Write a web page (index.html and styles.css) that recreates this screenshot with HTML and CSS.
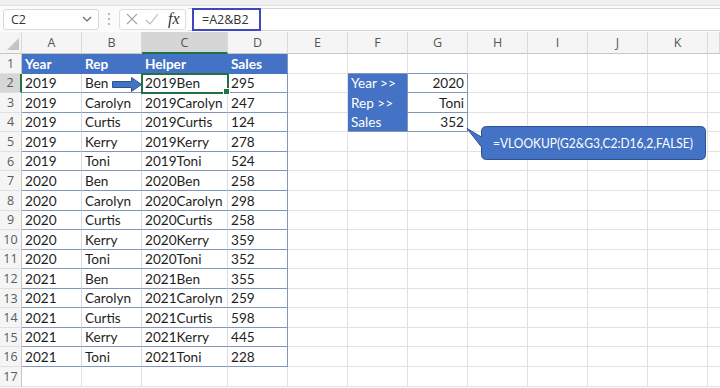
FILE: index.html
```html
<!DOCTYPE html>
<html lang="en">
<head>
    <meta charset="UTF-8">
    <title>VLOOKUP helper column</title>
    <link rel="stylesheet" href="styles.css">
</head>
<body>
    <div class="ribbon-strip"></div>
    <div class="formula-row">
        <div class="name-box">
            <span>C2</span>
            <svg width="12" height="8" viewBox="0 0 12 8"><path d="M2 2 L6 6 L10 2" fill="none" stroke="#666" stroke-width="1.2"/></svg>
        </div>
        <div class="grip">
            <svg width="4" height="14" viewBox="0 0 4 14"><circle cx="2" cy="2" r="1.1" fill="#aaa"/><circle cx="2" cy="7" r="1.1" fill="#aaa"/><circle cx="2" cy="12" r="1.1" fill="#aaa"/></svg>
        </div>
        <div class="fx-box">
            <svg width="14" height="14" viewBox="0 0 14 14"><path d="M2 2 L12 12 M12 2 L2 12" stroke="#a6a6a6" stroke-width="1.1"/></svg>
            <svg width="16" height="14" viewBox="0 0 16 14"><path d="M2 8 L6 12 L14 2" fill="none" stroke="#b5b5b5" stroke-width="1.1"/></svg>
            <span class="fx">fx</span>
        </div>
        <div class="formula-bar">
            <div class="formula-edit">=A2&amp;B2</div>
        </div>
    </div>

    <table class="sheet">
        <colgroup>
            <col style="width:22px"><col style="width:60px"><col style="width:60px"><col style="width:86px">
            <col style="width:60px"><col style="width:60px"><col style="width:60px"><col style="width:60px">
            <col style="width:60px"><col style="width:60px"><col style="width:60px"><col style="width:60px">
            <col style="width:12px">
        </colgroup>
        <thead>
            <tr>
                <th class="corner"><span class="corner-mark"></span></th>
                <th>A</th><th>B</th><th class="active-col">C</th><th>D</th><th>E</th><th>F</th>
                <th>G</th><th>H</th><th>I</th><th>J</th><th>K</th><th class="edge"></th>
            </tr>
        </thead>
        <tbody>
            <tr>
                <th>1</th>
                <td class="hdr">Year</td><td class="hdr">Rep</td><td class="hdr">Helper</td><td class="hdr last">Sales</td>
                <td></td><td class="above-box"></td><td class="above-box"></td><td></td><td></td><td></td><td></td><td class="edge"></td>
            </tr>
            <tr>
                <th class="active-row">2</th>
                <td class="t">2019</td><td class="t">Ben</td><td class="t selected">2019Ben</td><td class="t last">295</td>
                <td></td><td class="lbl">Year &gt;&gt;</td><td class="val">2020</td><td></td><td></td><td></td><td></td><td class="edge"></td>
            </tr>
            <tr>
                <th>3</th>
                <td class="t">2019</td><td class="t">Carolyn</td><td class="t">2019Carolyn</td><td class="t last">247</td>
                <td></td><td class="lbl">Rep &gt;&gt;</td><td class="val">Toni</td><td></td><td></td><td></td><td></td><td class="edge"></td>
            </tr>
            <tr>
                <th>4</th>
                <td class="t">2019</td><td class="t">Curtis</td><td class="t">2019Curtis</td><td class="t last">124</td>
                <td></td><td class="lbl">Sales</td><td class="val">352</td><td></td><td></td><td></td><td></td><td class="edge"></td>
            </tr>
            <tr>
                <th>5</th>
                <td class="t">2019</td><td class="t">Kerry</td><td class="t">2019Kerry</td><td class="t last">278</td>
                <td></td><td></td><td></td><td></td><td></td><td></td><td></td><td class="edge"></td>
            </tr>
            <tr>
                <th>6</th>
                <td class="t">2019</td><td class="t">Toni</td><td class="t">2019Toni</td><td class="t last">524</td>
                <td></td><td></td><td></td><td></td><td></td><td></td><td></td><td class="edge"></td>
            </tr>
            <tr>
                <th>7</th>
                <td class="t">2020</td><td class="t">Ben</td><td class="t">2020Ben</td><td class="t last">258</td>
                <td></td><td></td><td></td><td></td><td></td><td></td><td></td><td class="edge"></td>
            </tr>
            <tr>
                <th>8</th>
                <td class="t">2020</td><td class="t">Carolyn</td><td class="t">2020Carolyn</td><td class="t last">298</td>
                <td></td><td></td><td></td><td></td><td></td><td></td><td></td><td class="edge"></td>
            </tr>
            <tr>
                <th>9</th>
                <td class="t">2020</td><td class="t">Curtis</td><td class="t">2020Curtis</td><td class="t last">258</td>
                <td></td><td></td><td></td><td></td><td></td><td></td><td></td><td class="edge"></td>
            </tr>
            <tr>
                <th>10</th>
                <td class="t">2020</td><td class="t">Kerry</td><td class="t">2020Kerry</td><td class="t last">359</td>
                <td></td><td></td><td></td><td></td><td></td><td></td><td></td><td class="edge"></td>
            </tr>
            <tr>
                <th>11</th>
                <td class="t">2020</td><td class="t">Toni</td><td class="t">2020Toni</td><td class="t last">352</td>
                <td></td><td></td><td></td><td></td><td></td><td></td><td></td><td class="edge"></td>
            </tr>
            <tr>
                <th>12</th>
                <td class="t">2021</td><td class="t">Ben</td><td class="t">2021Ben</td><td class="t last">355</td>
                <td></td><td></td><td></td><td></td><td></td><td></td><td></td><td class="edge"></td>
            </tr>
            <tr>
                <th>13</th>
                <td class="t">2021</td><td class="t">Carolyn</td><td class="t">2021Carolyn</td><td class="t last">259</td>
                <td></td><td></td><td></td><td></td><td></td><td></td><td></td><td class="edge"></td>
            </tr>
            <tr>
                <th>14</th>
                <td class="t">2021</td><td class="t">Curtis</td><td class="t">2021Curtis</td><td class="t last">598</td>
                <td></td><td></td><td></td><td></td><td></td><td></td><td></td><td class="edge"></td>
            </tr>
            <tr>
                <th>15</th>
                <td class="t">2021</td><td class="t">Kerry</td><td class="t">2021Kerry</td><td class="t last">445</td>
                <td></td><td></td><td></td><td></td><td></td><td></td><td></td><td class="edge"></td>
            </tr>
            <tr>
                <th>16</th>
                <td class="t">2021</td><td class="t">Toni</td><td class="t">2021Toni</td><td class="t last">228</td>
                <td></td><td></td><td></td><td></td><td></td><td></td><td></td><td class="edge"></td>
            </tr>
            <tr>
                <th>17</th>
                <td></td><td></td><td></td><td></td>
                <td></td><td></td><td></td><td></td><td></td><td></td><td></td><td class="edge"></td>
            </tr>
        </tbody>
    </table>

    <!-- shapes drawn over the grid -->
    <svg class="shapes" width="720" height="388" viewBox="0 0 720 388">
        <path d="M112.5 81.5 H131.5 V77.5 L141.5 84.5 L131.5 91.5 V87.5 H112.5 Z" fill="#4472c4" stroke="#2f528f" stroke-width="1"/>
        <path d="M486.5 126.5 H700.5 Q705.5 126.5 705.5 131.5 V154.5 Q705.5 159.5 700.5 159.5 H486.5 Q481.5 159.5 481.5 154.5 V147 L467 128.5 L481.5 137 V131.5 Q481.5 126.5 486.5 126.5 Z" fill="#4472c4" stroke="#2f528f" stroke-width="1"/>
        <text class="callout-text" x="493" y="148" textLength="200" lengthAdjust="spacingAndGlyphs">=VLOOKUP(G2&amp;G3,C2:D16,2,FALSE)</text>
    </svg>
</body>
</html>
```

FILE: styles.css
```css
body {
    margin: 0;
    width: 720px;
    height: 388px;
    overflow: hidden;
    position: relative;
    background-color: #ffffff;
    font-family: Lato, "Open Sans", sans-serif;
}
.ribbon-strip {
    height: 5px;
    background-color: #f0f0f0;
    border-bottom: 1px solid #e0e0e0;
}
.formula-row {
    height: 26px;
    display: flex;
    align-items: center;
    background-color: #fbfbfb;
    font-family: "Open Sans", sans-serif;
    font-size: 12.5px;
    color: #333;
}
.name-box {
    margin-left: 3px;
    width: 96px;
    height: 21px;
    box-sizing: border-box;
    border: 1px solid #d8d8d8;
    border-radius: 3px;
    background-color: #fff;
    display: flex;
    align-items: center;
    justify-content: space-between;
    padding: 0 5px 0 7px;
}
.grip {
    width: 20px;
    display: flex;
    justify-content: center;
}
.fx-box {
    width: 67px;
    height: 21px;
    box-sizing: border-box;
    border: 1px solid #dedede;
    border-radius: 3px;
    background-color: #fff;
    display: flex;
    align-items: center;
    gap: 5px;
    padding-left: 5px;
}
.fx {
    font-family: "Liberation Serif", serif;
    font-style: italic;
    font-size: 16px;
    color: #333;
    margin-left: 3px;
}
.formula-bar {
    flex: 1;
    margin-left: 2px;
    height: 23px;
    box-sizing: border-box;
    border-top: 1px solid #d4d4d4;
    border-bottom: 1px solid #d4d4d4;
    background-color: #fff;
    display: flex;
    align-items: center;
}
.formula-edit {
    margin-left: 4px;
    width: 69px;
    height: 23px;
    box-sizing: border-box;
    border: 2px solid #3d47c0;
    padding-left: 8px;
    line-height: 19px;
    background-color: #fff;
}

.sheet {
    border-collapse: separate;
    border-spacing: 0;
    table-layout: fixed;
    width: 720px;
}
.sheet thead th {
    height: 21px;
    padding: 0;
    background-color: #f5f5f5;
    border-right: 1px solid #d9d9d9;
    border-bottom: 1px solid #c6c6c6;
    font-family: "Open Sans", sans-serif;
    font-weight: normal;
    font-size: 12.5px;
    color: #555;
    text-align: center;
}
.sheet thead th.active-col {
    background-color: #d6d6d6;
    border-bottom: 2px solid #217346;
    height: 20px;
}
.corner {
    position: relative;
}
.corner-mark {
    position: absolute;
    right: 2px;
    bottom: 3px;
    width: 0;
    height: 0;
    border-left: 12px solid transparent;
    border-bottom: 12px solid #c4c4c4;
}
.sheet tbody th {
    height: 18.57px;
    padding: 0;
    background-color: #f5f5f5;
    border-right: 1px solid #c6c6c6;
    border-bottom: 1px solid #e1e1e1;
    font-family: "Open Sans", sans-serif;
    font-weight: normal;
    font-size: 12.5px;
    color: #5a5a5a;
    text-align: center;
}
.sheet tbody th.active-row {
    background-color: #d6d6d6;
    border-right: 2px solid #217346;
}
.sheet td {
    padding: 0 3px;
    border-right: 1px solid #e1e1e1;
    border-bottom: 1px solid #e1e1e1;
    font-size: 13.6px;
    color: #1e1e1e;
    white-space: nowrap;
    overflow: visible;
    vertical-align: bottom;
    line-height: 17px;
}
.sheet td.edge {
    border-right: none;
}
.sheet td.hdr {
    background-color: #4472c4;
    color: #fff;
    font-weight: bold;
    border-right-color: #4472c4;
    border-bottom-color: #4472c4;
}
.sheet td.t {
    border-bottom-color: #8196b8;
    border-right-color: #d6dbe3;
}
.sheet td.last {
    border-right-color: #8196b8;
}
.sheet td.selected {
    position: relative;
    outline: 2px solid #217346;
    outline-offset: -1px;
}
.sheet td.selected::after {
    content: "";
    position: absolute;
    right: -3px;
    bottom: -3px;
    width: 5px;
    height: 5px;
    background-color: #217346;
    border: 1px solid #fff;
}
.sheet td.above-box {
    border-bottom-color: #8196b8;
}
.sheet td.lbl {
    background-color: #4472c4;
    color: #fff;
    border-right-color: #8196b8;
    border-bottom-color: #4472c4;
}
.sheet td.val {
    text-align: right;
    border-right-color: #8196b8;
    border-bottom-color: #8196b8;
}
.sheet tr:nth-child(4) td.lbl {
    border-bottom-color: #8196b8;
}

.shapes {
    position: absolute;
    top: 0;
    left: 0;
    pointer-events: none;
}
.callout-text {
    fill: #fff;
    font-family: Lato, sans-serif;
    font-size: 13.5px;
}
```
